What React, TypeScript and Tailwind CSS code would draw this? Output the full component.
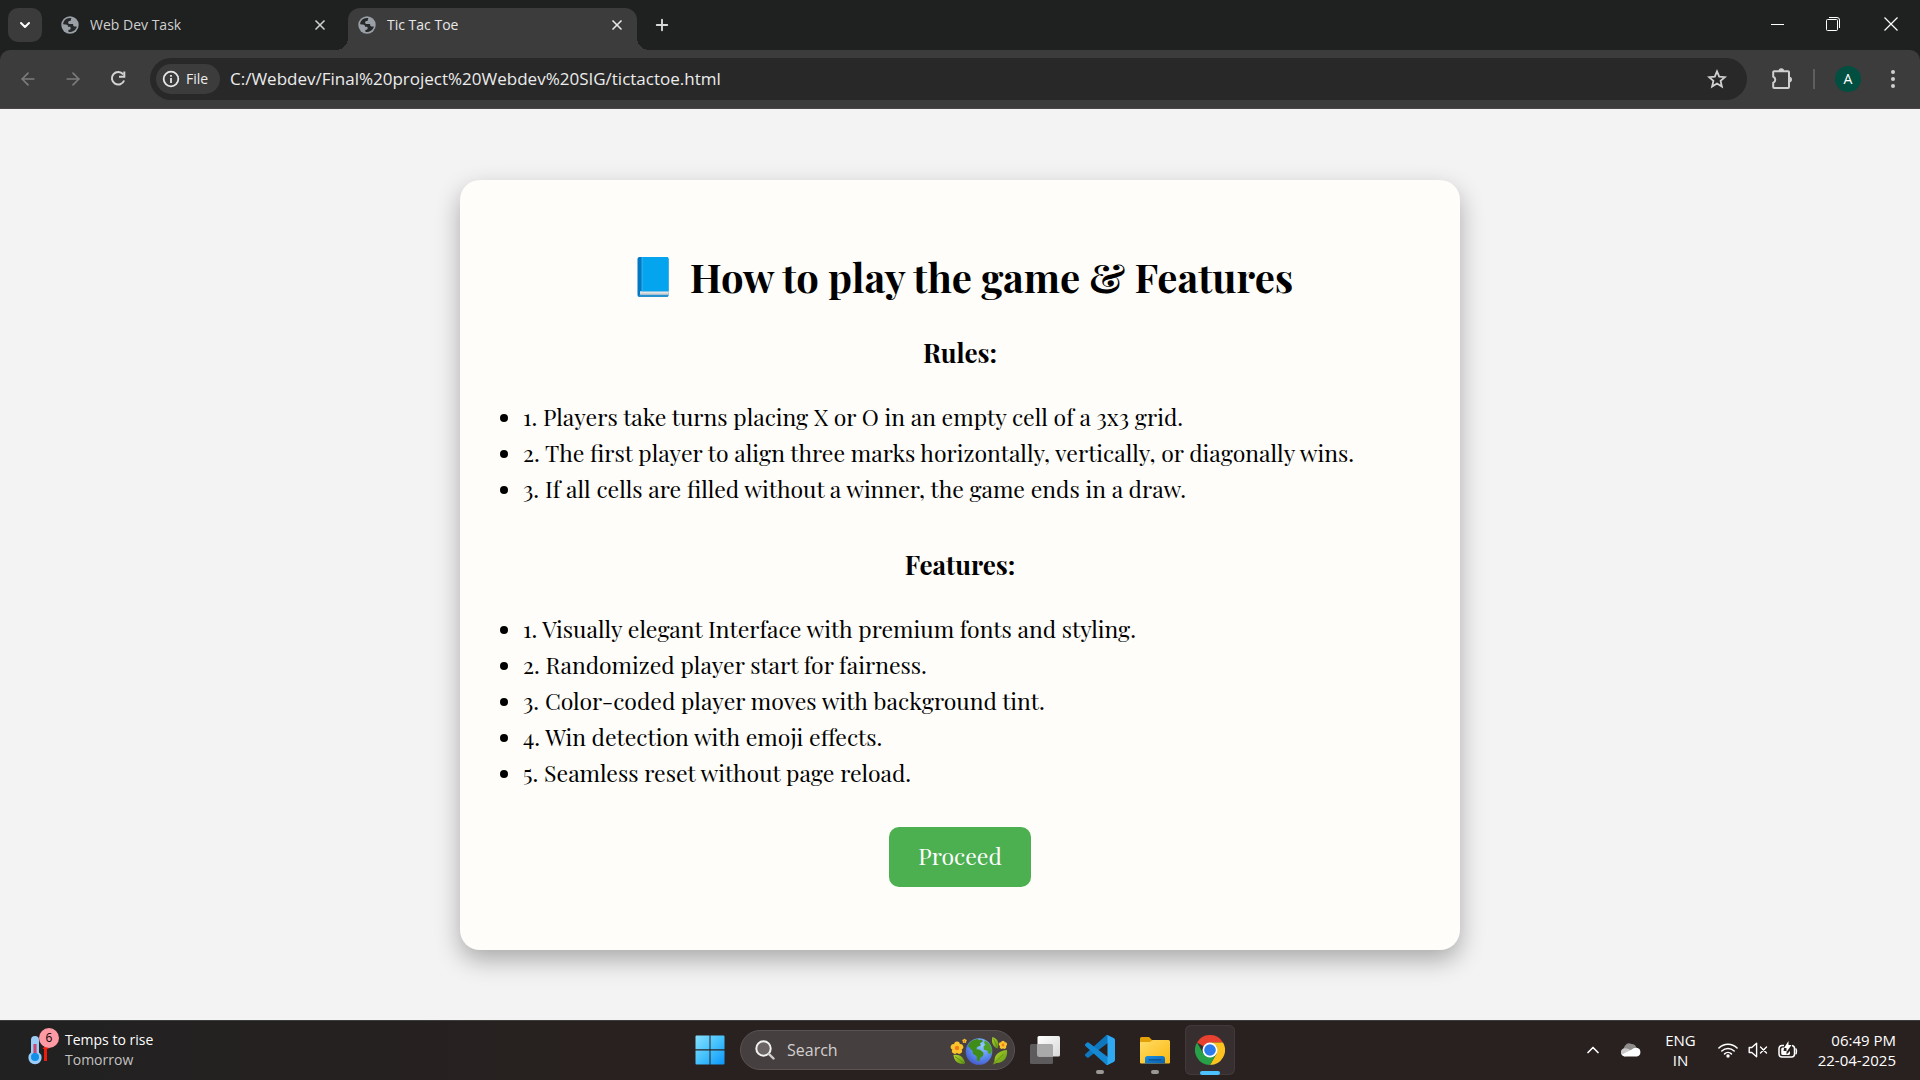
import type { ReactNode } from "react";
import {
  ArrowLeft,
  ArrowRight,
  ChevronDown,
  ChevronUp,
  Plus,
  X,
} from "lucide-react";

const rules = [
  "1. Players take turns placing X or O in an empty cell of a 3x3 grid.",
  "2. The first player to align three marks horizontally, vertically, or diagonally wins.",
  "3. If all cells are filled without a winner, the game ends in a draw.",
];

const features = [
  "1. Visually elegant Interface with premium fonts and styling.",
  "2. Randomized player start for fairness.",
  "3. Color-coded player moves with background tint.",
  "4. Win detection with emoji effects.",
  "5. Seamless reset without page reload.",
];

function Globe() {
  return (
    <svg viewBox="0 0 18 18" className="size-[18px] shrink-0" aria-hidden="true">
      <circle cx="9" cy="9" r="8.7" fill="#9aa0a6" />
      <path
        d="M10.4 2.2C8 1.500 4.600 2.600 3 5.200c-.6 1-.9 2-.9 3.100l2.500.1c2.300.1 2.300.9 2.400 2.300h1.600c.6 0 1 .4 1 1v1.100c0 .5-.4.900-.9.9H7.400v2.100c2.900.7 6.200-.6 7.700-3.300.4-.7.6-1.300.700-2h-1.900c-1 0-1.800-.8-1.800-1.800V7.900H8.600c-.9 0-1.500-.7-1.500-1.500 0-.9.700-1.500 1.500-1.500h.9c.3-1.200.5-1.900.9-2.700z"
        fill="#26282a"
      />
    </svg>
  );
}

function Reload() {
  return (
    <svg viewBox="0 0 18 18" className="size-[18px]" fill="none" stroke="#d4d4d4" strokeWidth="2" aria-hidden="true">
      <path d="M14.200 4.400A6.300 6.300 0 1 0 15.100 10.500" />
      <path d="M15.300 1.500v5.300h-5.300" />
    </svg>
  );
}

function Star() {
  return (
    <svg viewBox="0 0 20 20" className="size-5" fill="none" stroke="#d0d0d0" strokeWidth="1.800" aria-hidden="true">
      <path d="M10 2.400l2.200 5.300 5.700.5-4.300 3.700 1.300 5.600-4.900-3-4.900 3 1.300-5.600L2.100 8.200l5.700-.5z" />
    </svg>
  );
}

function Puzzle() {
  return (
    <svg viewBox="0 0 22 22" className="size-[22px]" aria-hidden="true">
      <path
        d="M3.200 3.200H17a1 1 0 0 1 1 1V19a1 1 0 0 1-1 1H3.200a1 1 0 0 1-1-1v-4.200a3.200 3.200 0 0 0 0-6V4.200a1 1 0 0 1 1-1z"
        fill="none"
        stroke="#cfcfcf"
        strokeWidth="2"
        strokeLinejoin="round"
      />
      <path d="M7.500 3a2.800 2.800 0 0 1 5.600 0zM18.200 8.800a2.800 2.800 0 0 1 0 5.600z" fill="#cfcfcf" />
    </svg>
  );
}

function Dots() {
  return (
    <svg viewBox="0 0 20 20" className="size-5" fill="#cfcfcf" aria-hidden="true">
      <circle cx="10" cy="3" r="2" />
      <circle cx="10" cy="10" r="2" />
      <circle cx="10" cy="17" r="2" />
    </svg>
  );
}

function InfoIcon() {
  return (
    <svg viewBox="0 0 18 18" className="size-[18px]" aria-hidden="true">
      <circle cx="9" cy="9" r="7.300" fill="none" stroke="#e6e6e6" strokeWidth="1.800" />
      <path d="M8.100 8h1.800v5H8.100zM8.100 4.900h1.800v1.800H8.100z" fill="#e6e6e6" />
    </svg>
  );
}

function BlueBook() {
  return (
    <svg viewBox="0 0 32 40" className="ml-[10px] h-10 w-8 shrink-0" aria-hidden="true">
      <rect x="0.500" y="0" width="31" height="40" rx="2" fill="#0078c4" />
      <path d="M3 34.500h28.500v4.200H3z" fill="#cfd3d6" />
      <path d="M3 34.500h28.500v1H3z" fill="#f4f4f4" />
      <path d="M2 37.700h29.500V38a2 2 0 0 1-2 2H2.500z" fill="#2790cf" />
      <path d="M5 0h24.500a2 2 0 0 1 2 2v32.300H5z" fill="#04a4ee" />
      <path d="M4.600 0h.9v34.300h-.9z" fill="#3fb6ee" />
    </svg>
  );
}

function Thermometer() {
  return (
    <svg viewBox="0 0 24 30" className="h-[30px] w-6" aria-hidden="true">
      <path d="M17.500 12v14" stroke="#ee1c0c" strokeWidth="3" />
      <path d="M14.500 14l3-4 3.500 4z" fill="#ee1c0c" />
      <path d="M3 5a4 4 0 0 1 8 0v12.500a6.600 6.600 0 1 1-8 0z" fill="#9ccdf8" />
      <path d="M5.400 9h3.200v12H5.400z" fill="#c9486f" />
      <circle cx="7" cy="22" r="4" fill="#128fe6" />
    </svg>
  );
}

function WindowsLogo() {
  return (
    <svg viewBox="0 0 30 30" className="size-[30px]" aria-hidden="true">
      <defs>
        <linearGradient id="win" x1="0" y1="0" x2="30" y2="30" gradientUnits="userSpaceOnUse">
          <stop offset="0" stopColor="#8ae0ff" />
          <stop offset="0.500" stopColor="#45c2fc" />
          <stop offset="1" stopColor="#0a94fa" />
        </linearGradient>
      </defs>
      <path
        d="M1.500.5h13v13.800H.5V1.500a1 1 0 0 1 1-1zM15.500.5h13a1 1 0 0 1 1 1v12.800h-14zM.5 15.500h14v14h-13a1 1 0 0 1-1-1zM15.500 15.500h14v13a1 1 0 0 1-1 1h-13z"
        fill="url(#win)"
      />
    </svg>
  );
}

function SearchGlass() {
  return (
    <svg viewBox="0 0 20 20" className="size-5" fill="none" aria-hidden="true">
      <circle cx="8.500" cy="8.500" r="7.200" stroke="#f2f2f2" strokeWidth="2" fill="#6a6464" />
      <path d="M13.800 13.800l4.700 4.700" stroke="#cfcfcf" strokeWidth="2.400" strokeLinecap="round" />
    </svg>
  );
}

function Flower({ x, y, s }: { x: number; y: number; s: number }) {
  return (
    <g transform={`translate(${x} ${y}) scale(${s})`}>
      {[0, 72, 144, 216, 288].map((a) => (
        <circle key={a} cx="0" cy="-3.600" r="2.900" fill="#fcc42c" transform={`rotate(${a})`} />
      ))}
      <circle r="2.200" fill="#f07c1a" />
    </g>
  );
}

function EarthArt() {
  return (
    <svg viewBox="0 0 58 32" className="h-8 w-[58px]" aria-hidden="true">
      <defs>
        <radialGradient id="sea" cx="0.620" cy="0.280" r="0.800">
          <stop offset="0" stopColor="#8fc8ff" />
          <stop offset="0.550" stopColor="#5b8df0" />
          <stop offset="1" stopColor="#4455c8" />
        </radialGradient>
        <linearGradient id="leaf" x1="0" y1="0" x2="1" y2="1">
          <stop offset="0" stopColor="#b4d62c" />
          <stop offset="1" stopColor="#5a9414" />
        </linearGradient>
      </defs>
      <path d="M3.500 21c5-1.500 11 2 11.500 8.500C9 31 4 27.500 3.500 21z" fill="url(#leaf)" />
      <path d="M42.500 3c5 1.500 7.500 6 5 11.500-4.500-2-6.500-6-5-11.500z" fill="url(#leaf)" />
      <path d="M57 16c1 7-3 13-10.500 13L43 30.500l1.500-3.500C44 20.500 50 16.500 57 16z" fill="url(#leaf)" />
      <path d="M43.500 30l10-10M5 22.500l9 6.500M43.500 4.500l3.500 8.500" stroke="#557f10" strokeWidth="0.700" />
      <circle cx="29" cy="17.500" r="13.300" fill="url(#sea)" />
      <path d="M18 12c1.500-4 5.500-6.700 9.500-7l2 1.200 2-.8 1.500 1.800-3 2 .8 2.300-3.800 1.500-.5 2.300 3.500.5 3.500 3-.5 3.200-2.500 1.500-1.500 4-2-1-.5-4.500-3.500-2-.5-3z" fill="#3f8d18" />
      <path d="M35 6.500c4 2 6.500 5.500 7 10l-1.500 4-2-1-1.200-3-3.300-.8-.5-3 2-2.200-1.500-1.500z" fill="#4fa022" />
      <Flower x={7} y={14} s={1} />
      <Flower x={14.500} y={7} s={0.350} />
      <Flower x={53} y={11} s={0.650} />
    </svg>
  );
}

function TaskView() {
  return (
    <svg viewBox="0 0 30 30" className="size-[30px]" aria-hidden="true">
      <defs>
        <linearGradient id="tv" x1="0" y1="0" x2="1" y2="1">
          <stop offset="0" stopColor="#ffffff" />
          <stop offset="1" stopColor="#d8d8d8" />
        </linearGradient>
      </defs>
      <rect x="0" y="9" width="23" height="20" rx="1.500" fill="#5d5b5b" />
      <rect x="7.500" y="1" width="22.500" height="20.500" rx="1.500" fill="url(#tv)" />
      <path d="M7.500 9H21.500a1.500 1.500 0 0 1 1.500 1.500v11H9a1.500 1.500 0 0 1-1.500-1.500z" fill="#a9a9a9" />
    </svg>
  );
}

function VSCode() {
  return (
    <svg viewBox="0 0 100 100" className="size-[30px]" aria-hidden="true">
      <path d="M96.500 10.800L75.900.9a6.200 6.200 0 0 0-7.100 1.200L1.300 63.600a4.200 4.200 0 0 0 0 6.200l5.500 5a4.200 4.200 0 0 0 5.300.2l81.200-61.600c2.700-2.100 6.700-.1 6.700 3.300v-.2a6.300 6.300 0 0 0-3.500-5.700z" fill="#0f77bd" />
      <path d="M96.500 89.200l-20.600 9.900a6.200 6.200 0 0 1-7.100-1.200L1.300 36.400a4.200 4.200 0 0 1 0-6.200l5.500-5a4.200 4.200 0 0 1 5.300-.2l81.200 61.600c2.700 2.100 6.700.1 6.700-3.300v.2a6.300 6.300 0 0 1-3.500 5.700z" fill="#1588d4" />
      <path d="M75.900 99.100a6.200 6.200 0 0 1-7.100-1.200c2.300 2.300 6.200.7 6.200-2.600V4.700c0-3.300-3.900-4.900-6.200-2.600a6.200 6.200 0 0 1 7.100-1.200l20.600 9.900a6.300 6.300 0 0 1 3.500 5.700v67a6.300 6.300 0 0 1-3.500 5.700z" fill="#2fa9f2" />
    </svg>
  );
}

function Folder() {
  return (
    <svg viewBox="0 0 30 30" className="size-[30px]" aria-hidden="true">
      <defs>
        <linearGradient id="fold" x1="0" y1="0" x2="1" y2="1">
          <stop offset="0" stopColor="#ffdc66" />
          <stop offset="1" stopColor="#fbb80f" />
        </linearGradient>
        <linearGradient id="tray" x1="0" y1="0" x2="1" y2="1">
          <stop offset="0" stopColor="#1a8fe0" />
          <stop offset="1" stopColor="#0a5fae" />
        </linearGradient>
      </defs>
      <path d="M0 3.500A1.500 1.500 0 0 1 1.500 2H9l3.500 3.500V10H0z" fill="#e3a008" />
      <path d="M0 7h10l2.500-2H28.500A1.500 1.500 0 0 1 30 6.500V27a1.300 1.300 0 0 1-1.500 1.500h-27A1.300 1.300 0 0 1 0 27z" fill="url(#fold)" />
      <path d="M5 28.500V23.500A2.500 2.500 0 0 1 7.500 21h15a2.500 2.500 0 0 1 2.500 2.500v5z" fill="url(#tray)" />
      <path d="M9 24.800h12" stroke="#0a4d8c" strokeWidth="1.200" strokeLinecap="round" />
    </svg>
  );
}

function Chrome() {
  return (
    <svg viewBox="0 0 48 48" className="size-[30px]" aria-hidden="true">
      <path d="M24 24L3.200 12A24 24 0 0 1 44.800 12H24z" fill="#e8412f" />
      <path d="M44.800 12A24 24 0 0 1 24 48L34.400 30 34.400 18 24 12z" fill="#fcc31e" />
      <path d="M3.200 12A24 24 0 0 0 24 48l10.400-18L24 30 13.600 30z" fill="#27a048" />
      <circle cx="24" cy="24" r="12" fill="#fff" />
      <circle cx="24" cy="24" r="9.300" fill="#2b7bea" />
    </svg>
  );
}

function Cloud() {
  return (
    <svg viewBox="0 0 20 14" className="h-[14px] w-5" aria-hidden="true">
      <path d="M4 9a5.300 5.300 0 0 1 6.500-8 5.500 5.500 0 0 1 5 4l-6 4z" fill="#8f8c8c" />
      <path d="M3.800 5.200c3 0 4.500 1 7 2.500L4 13.500A4.100 4.100 0 0 1 3.800 5.200z" fill="#c9c7c7" />
      <path d="M15.500 4.800a4.400 4.400 0 0 1 .3 8.700H4A4 4 0 0 1 .8 11.500l9.500-4.700c1.500-1.200 3-2 5.200-2z" fill="#fff" />
    </svg>
  );
}

function Wifi() {
  return (
    <svg viewBox="0 0 20 16" className="h-4 w-5" fill="none" stroke="#fff" strokeWidth="1.500" strokeLinecap="round" aria-hidden="true">
      <path d="M.9 6a13 13 0 0 1 18.200 0M3.800 9a9 9 0 0 1 12.400 0M6.600 11.900a5 5 0 0 1 6.800 0" />
      <circle cx="10" cy="14" r="1.700" fill="#fff" stroke="none" />
    </svg>
  );
}

function Mute() {
  return (
    <svg viewBox="0 0 20 16" className="h-4 w-5" fill="none" stroke="#fff" strokeWidth="1.400" strokeLinejoin="round" strokeLinecap="round" aria-hidden="true">
      <path d="M1.200 5.500h2.600L8.600 1.300v13.400l-4.800-4.200H1.200z" />
      <path d="M12.500 5l6 6M18.500 5l-6 6" />
    </svg>
  );
}

function Battery() {
  return (
    <svg viewBox="0 0 20 18" className="h-[18px] w-5" aria-hidden="true">
      <path d="M6 4.500H4a3 3 0 0 0-3 3V13a3 3 0 0 0 3 3h9.500a3 3 0 0 0 3-3V7.500a3 3 0 0 0-2.500-3" fill="none" stroke="#fff" strokeWidth="1.500" />
      <path d="M17.500 7.500c1.300.5 1.300 5 0 5.500" fill="none" stroke="#fff" strokeWidth="1.500" />
      <path d="M3.200 8A1.500 1.500 0 0 1 4.700 6.500h1.500L5.500 10h3v3.500L12 10v2.500a1.500 1.500 0 0 1-1.500 1.500H4.700a1.500 1.500 0 0 1-1.500-1.500z" fill="#fff" />
      <path d="M10.500 0v4h3L8.500 11V7H6z" fill="#fff" />
    </svg>
  );
}

function Tab({ title, active }: { title: string; active?: boolean }) {
  return (
    <div
      className={
        active
          ? "relative flex w-[289px] items-center rounded-t-xl bg-[#3c3c3c] pr-2 pb-2 pl-[10px] text-[#e8e8e8]"
          : "relative flex w-[297px] items-center pr-4 pb-2 pl-[10px] text-[#cfcfcf]"
      }
    >
      {active && (
        <>
          <span className="absolute bottom-0 -left-3 size-3 bg-[radial-gradient(circle_at_0_0,transparent_12px,#3c3c3c_12px)]" />
          <span className="absolute -right-3 bottom-0 size-3 bg-[radial-gradient(circle_at_100%_0,transparent_12px,#3c3c3c_12px)]" />
        </>
      )}
      <button className="flex min-w-0 grow items-center gap-[11px] text-left">
        <Globe />
        <span className="truncate text-sm leading-5">{title}</span>
      </button>
      <button aria-label={`Close ${title}`} className="flex size-6 items-center justify-center">
        <X className="size-4" strokeWidth={2.500} />
      </button>
    </div>
  );
}

function TabStrip() {
  return (
    <div className="flex h-[50px] bg-[#1f2120] pt-2 pl-2">
      <button
        aria-label="Search tabs"
        className="mr-[9px] flex size-[34px] items-center justify-center rounded-[10px] bg-[#3b3b3b] text-white"
      >
        <ChevronDown className="size-4" strokeWidth={3} />
      </button>
      <Tab title="Web Dev Task" />
      <Tab title="Tic Tac Toe" active />
      <button aria-label="New tab" className="ml-2 flex size-[34px] items-center justify-center text-[#d8d8d8]">
        <Plus className="size-[18px]" strokeWidth={2.500} />
      </button>
      <div className="ml-auto flex h-8 text-white">
        <button aria-label="Minimize" className="flex w-14 items-center justify-center">
          <span className="h-px w-[13px] bg-white" />
        </button>
        <button aria-label="Restore" className="flex w-14 items-center justify-center">
          <svg viewBox="0 0 14 14" className="size-[14px]" fill="none" stroke="#fff" aria-hidden="true">
            <rect x="0.500" y="2.500" width="11" height="11" rx="1" />
            <path d="M3 .5h8a2.500 2.500 0 0 1 2.500 2.500v8" />
          </svg>
        </button>
        <button aria-label="Close window" className="flex w-[59px] items-center justify-center">
          <svg viewBox="0 0 14 14" className="size-[14px]" stroke="#fff" strokeWidth="1.200" aria-hidden="true">
            <path d="M.5.5l13 13M13.500.5l-13 13" />
          </svg>
        </button>
      </div>
    </div>
  );
}

function Toolbar() {
  return (
    <div className="bg-[#1f2120]">
      <div className="flex h-[59px] items-center rounded-t-[10px] border-b border-[#4c4646] bg-[#3c3c3c] px-[5px]">
        <button aria-label="Back" className="flex w-[45px] justify-center text-[#7c7c7c]">
          <ArrowLeft className="size-5" />
        </button>
        <button aria-label="Forward" className="flex w-[45px] justify-center text-[#7c7c7c]">
          <ArrowRight className="size-5" />
        </button>
        <button aria-label="Reload" className="flex w-[45px] justify-center">
          <Reload />
        </button>
        <div className="ml-[10px] flex h-[42px] grow items-center rounded-full bg-[#282828] pr-5 pl-[6px]">
          <button className="flex h-[30px] w-16 items-center gap-[6px] rounded-full bg-[#3c3c3c] pl-[6px] text-sm font-medium text-[#ececec]">
            <InfoIcon />
            File
          </button>
          <input
            aria-label="Address"
            className="ml-[10px] min-w-0 grow bg-transparent text-[17px] text-[#ececec] outline-none"
            defaultValue="C:/Webdev/Final%20project%20Webdev%20SIG/tictactoe.html"
          />
          <button aria-label="Bookmark this page">
            <Star />
          </button>
        </div>
        <div className="flex items-center pl-6">
          <button aria-label="Extensions">
            <Puzzle />
          </button>
          <span className="mx-5 h-5 w-[2px] bg-[#5e5e5e]" />
          <button
            aria-label="Profile A"
            className="flex size-[26px] items-center justify-center rounded-full bg-[#014f40] text-sm text-white"
          >
            A
          </button>
          <button aria-label="Menu" className="mr-3 ml-[22px]">
            <Dots />
          </button>
        </div>
      </div>
    </div>
  );
}

function RuleList({ items }: { items: string[] }) {
  return (
    <ul className="list-disc pl-8 text-[23px] leading-9">
      {items.map((item) => (
        <li key={item}>{item}</li>
      ))}
    </ul>
  );
}

function GamePage() {
  return (
    <main className="flex grow items-center justify-center bg-[#f3f3f3] py-8 font-['Playfair_Display','Liberation_Serif',serif] text-black">
      <section className="w-full max-w-[1000px] rounded-[20px] bg-[#fefdf9] px-[31px] pt-[65px] pb-[63px] shadow-[0_10px_25px_rgba(0,0,0,0.3)]">
        <h1 className="flex items-center justify-center gap-[21px] text-[40px] leading-[64px] font-bold">
          <BlueBook />
          How to play the game &amp; Features
        </h1>
        <h2 className="mt-[26px] mb-7 text-center text-[26px] leading-9 font-bold">Rules:</h2>
        <RuleList items={rules} />
        <h2 className="mt-10 mb-7 text-center text-[26px] leading-9 font-bold">Features:</h2>
        <RuleList items={features} />
        <div className="mt-9 flex justify-center">
          <button className="h-[60px] w-[142px] rounded-[10px] bg-[#4caf50] text-[23px] text-white">Proceed</button>
        </div>
      </section>
    </main>
  );
}

function AppTile({ label, active, running, children }: { label: string; active?: boolean; running?: boolean; children: ReactNode }) {
  return (
    <button
      aria-label={label}
      className={
        active
          ? "relative flex size-[50px] items-center justify-center rounded-md bg-[#372f2f] inset-ring inset-ring-[#423a3a]"
          : "relative flex size-[50px] items-center justify-center"
      }
    >
      {children}
      {active && <span className="absolute bottom-0 h-1 w-5 rounded-full bg-[#4cc2ff]" />}
      {running && <span className="absolute bottom-px h-1 w-2 rounded-full bg-[#9c9898]" />}
    </button>
  );
}

function Taskbar() {
  return (
    <footer className="grid h-[60px] grid-cols-[1fr_auto_1fr] items-center bg-linear-to-r from-[#212121] via-[#292120] via-35% to-[#292120] text-white inset-shadow-[0_1px_#3b3e3c]">
      <button className="flex items-center gap-2 pl-7 text-left">
        <span className="relative">
          <Thermometer />
          <span className="absolute -top-[7px] left-[11px] flex size-5 items-center justify-center rounded-full bg-[#ff99a4] text-xs text-black">
            6
          </span>
        </span>
        <span className="pl-[5px] text-sm leading-5">
          <span className="block">Temps to rise</span>
          <span className="block text-[#c4c2c2]">Tomorrow</span>
        </span>
      </button>
      <div className="flex items-center gap-[5px]">
        <AppTile label="Start">
          <WindowsLogo />
        </AppTile>
        <label className="flex h-10 w-[275px] items-center rounded-full border border-[#5a5353] bg-[#463f3f] pr-[6px] pl-[14px]">
          <SearchGlass />
          <input
            aria-label="Search"
            placeholder="Search"
            className="ml-3 w-0 grow bg-transparent text-base text-white outline-none placeholder:text-[#d2cfcf]"
          />
          <EarthArt />
        </label>
        <AppTile label="Task view">
          <TaskView />
        </AppTile>
        <AppTile label="Visual Studio Code" running>
          <VSCode />
        </AppTile>
        <AppTile label="File Explorer" running>
          <Folder />
        </AppTile>
        <AppTile label="Google Chrome" active>
          <Chrome />
        </AppTile>
      </div>
      <div className="flex items-center justify-end pr-6 text-[15px] leading-5">
        <button aria-label="Show hidden icons" className="mr-[18px]">
          <ChevronUp className="size-5" strokeWidth={2} />
        </button>
        <button aria-label="OneDrive" className="mr-6">
          <Cloud />
        </button>
        <button className="mr-[22px] text-center">
          ENG
          <br />
          IN
        </button>
        <button aria-label="Network, sound and battery" className="mr-5 flex items-center gap-[10px]">
          <Wifi />
          <Mute />
          <Battery />
        </button>
        <button className="text-right">
          06:49 PM
          <br />
          22-04-2025
        </button>
      </div>
    </footer>
  );
}

export default function App() {
  return (
    <div className="flex min-h-screen flex-col font-['Segoe_UI','Open_Sans',sans-serif]">
      <TabStrip />
      <Toolbar />
      <GamePage />
      <Taskbar />
    </div>
  );
}
